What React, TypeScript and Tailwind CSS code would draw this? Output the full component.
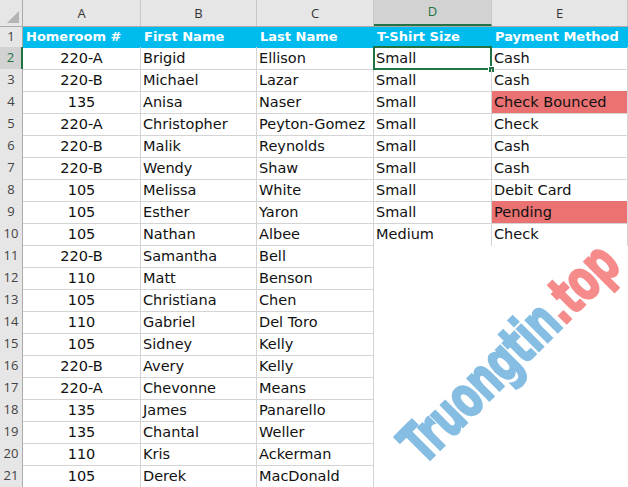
import React from "react";

const ROWS: string[][] = [
  ["220-A", "Brigid", "Ellison", "Small", "Cash"],
  ["220-B", "Michael", "Lazar", "Small", "Cash"],
  ["135", "Anisa", "Naser", "Small", "Check Bounced"],
  ["220-A", "Christopher", "Peyton-Gomez", "Small", "Check"],
  ["220-B", "Malik", "Reynolds", "Small", "Cash"],
  ["220-B", "Wendy", "Shaw", "Small", "Cash"],
  ["105", "Melissa", "White", "Small", "Debit Card"],
  ["105", "Esther", "Yaron", "Small", "Pending"],
  ["105", "Nathan", "Albee", "Medium", "Check"],
  ["220-B", "Samantha", "Bell"],
  ["110", "Matt", "Benson"],
  ["105", "Christiana", "Chen"],
  ["110", "Gabriel", "Del Toro"],
  ["105", "Sidney", "Kelly"],
  ["220-B", "Avery", "Kelly"],
  ["220-A", "Chevonne", "Means"],
  ["135", "James", "Panarello"],
  ["135", "Chantal", "Weller"],
  ["110", "Kris", "Ackerman"],
  ["105", "Derek", "MacDonald"],
];

const HEADERS = ["Homeroom #", "First Name", "Last Name", "T-Shirt Size", "Payment Method"];
const LETTERS = ["A", "B", "C", "D", "E"];
const FLAGGED = ["Check Bounced", "Pending"];

const cols = "grid grid-cols-[23px_118px_116px_117px_118px_136px]";
const dataFont = "font-['DejaVu_Sans',sans-serif] text-[14.5px] text-[#111]";

function RowNum({ n, active }: { n: number; active?: boolean }) {
  return (
    <div
      className={[
        "flex items-center justify-center border-b border-[#c8c8c8] font-['Open_Sans',sans-serif] text-[13px]",
        active
          ? "bg-[#d2d2d2] text-[#217346] border-r-2 border-r-[#217346]"
          : "bg-[#e6e6e6] text-[#444] border-r border-r-[#ababab]",
      ].join(" ")}
    >
      {n}
    </div>
  );
}

export default function App() {
  return (
    <div className="relative w-[628px] h-[487px] overflow-hidden bg-white">
      {/* Column letters */}
      <div className={`${cols} h-[27px] bg-[#e6e6e6] border-b border-[#ababab]`}>
        <div className="relative border-r border-[#ababab]">
          <div className="absolute right-[3px] bottom-[3px] w-0 h-0 border-l-[12px] border-l-transparent border-b-[12px] border-b-[#b4b4b4]" />
        </div>
        {LETTERS.map((l) => (
          <div
            key={l}
            className={[
              "flex items-end justify-center pb-[3px] border-r border-[#c8c8c8] font-['Open_Sans',sans-serif] text-[13px]",
              l === "D" ? "bg-[#d2d2d2] text-[#217346] border-b-2 border-b-[#217346]" : "text-[#333]",
            ].join(" ")}
          >
            {l}
          </div>
        ))}
      </div>

      {/* Header row */}
      <div className={`${cols} h-[20px]`}>
        <RowNum n={1} />
        {HEADERS.map((h) => (
          <div
            key={h}
            className="bg-[#00bbee] text-white font-bold font-['DejaVu_Sans',sans-serif] text-[13px] leading-[20px] px-[3px] whitespace-nowrap overflow-hidden"
          >
            {h}
          </div>
        ))}
      </div>

      {/* Data rows */}
      {ROWS.map((r, i) => {
        const rowNo = i + 2;
        const inTable = r.length > 3;
        const lastTable = rowNo === 10;
        return (
          <div key={rowNo} className={`${cols} h-[22px]`}>
            <RowNum n={rowNo} active={rowNo === 2} />
            <div className={`${dataFont} border-r border-b border-[#d4d4d4] text-center leading-[22px]`}>{r[0]}</div>
            <div className={`${dataFont} border-r border-b border-[#d4d4d4] px-[2px] leading-[22px] whitespace-nowrap`}>{r[1]}</div>
            <div className={`${dataFont} border-r border-b border-[#d4d4d4] px-[2px] leading-[22px] whitespace-nowrap`}>{r[2]}</div>
            <div
              className={[
                dataFont,
                "relative px-[2px] leading-[22px] whitespace-nowrap",
                inTable ? "border-r border-[#d4d4d4]" : "",
                inTable && !lastTable ? "border-b" : "",
              ].join(" ")}
            >
              {r[3]}
              {rowNo === 2 && (
                <>
                  <div className="absolute -top-px -left-px -right-px -bottom-px border-2 border-[#217346]" />
                  <div className="absolute -right-[4px] -bottom-[4px] w-[7px] h-[7px] bg-[#217346] border border-white" />
                </>
              )}
            </div>
            <div
              className={[
                dataFont,
                "px-[2px] leading-[22px] whitespace-nowrap",
                inTable ? "border-r border-[#d4d4d4]" : "",
                inTable && !lastTable ? "border-b" : "",
                r[4] && FLAGGED.includes(r[4]) ? "bg-[#ea7272]" : "",
              ].join(" ")}
            >
              {r[4]}
            </div>
          </div>
        );
      })}

      {/* Watermark */}
      <div className="absolute left-[338px] top-[346px] w-[300px] text-center -rotate-[45deg] scale-x-[0.74] font-['DejaVu_Sans_Condensed','DejaVu_Sans',sans-serif] font-bold text-[57px] leading-none tracking-[-1px] text-[#86bde2] [-webkit-text-stroke:2px_currentColor] pointer-events-none">
        Truongtin<span className="text-[#f68b8b]">.top</span>
      </div>
    </div>
  );
}
